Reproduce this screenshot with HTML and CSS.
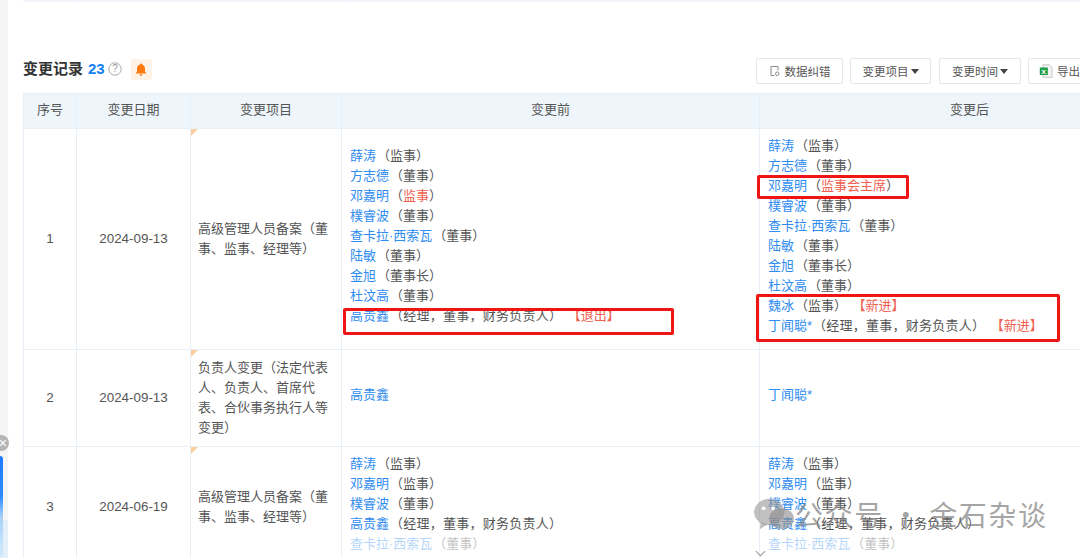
FILE: index.html
```html
<!DOCTYPE html>
<html lang="zh-CN">
<head>
<meta charset="utf-8">
<title>变更记录</title>
<link rel="stylesheet" href="styles.css">
</head>
<body>
<div class="page">
  <aside class="rail"></aside>
  <main class="main">
    <div class="prev-table"><i></i><i></i></div>
    <section class="head">
      <div class="title">
        <h2>变更记录</h2><span class="count">23</span>
        <svg class="help" viewBox="0 0 14 14" width="14" height="14"><circle cx="7" cy="7" r="6.2" fill="none" stroke="#aaa" stroke-width="1"/><text x="7" y="10.2" text-anchor="middle" class="help-q">?</text></svg>
        <span class="bell"><svg viewBox="0 0 12 13" width="12" height="13"><path d="M6 .6c.6 0 1 .4 1 .9 1.900.4 3 2 3 4v3l1.200 1.500v.5H.8v-.5L2 8.500v-3c0-2 1.100-3.600 3-4 0-.5.400-.9 1-.9zM4.500 11.300h3C7.500 12.200 6.800 12.800 6 12.800s-1.500-.6-1.500-1.500z" fill="#ff7a0f"/></svg></span>
      </div>
      <div class="tools">
        <button class="btn btn-wide"><svg viewBox="0 0 12 12" width="12" height="12"><path d="M2 1.500h7v4M2 1.500v9h3.500" fill="none" stroke="#888" stroke-width="1"/><rect x="6.500" y="7" width="3.500" height="3.500" rx="1.700" fill="none" stroke="#888"/></svg>数据纠错</button>
        <button class="btn">变更项目<i class="caret"></i></button>
        <button class="btn btn-time">变更时间<i class="caret"></i></button>
        <button class="btn btn-export"><svg viewBox="0 0 14 14" width="14" height="14"><path d="M4 .8h6.500L13 3.300v10H4z" fill="#f4f4f4" stroke="#bbb" stroke-width=".8"/><rect x=".8" y="3.500" width="8" height="7.500" fill="#1e9e4a"/><text x="4.800" y="9.600" text-anchor="middle" class="xl">x</text></svg>导出</button>
      </div>
    </section>
    <table class="records">
      <colgroup><col class="c1"><col class="c2"><col class="c3"><col class="c4"><col class="c5"></colgroup>
      <thead><tr><th>序号</th><th>变更日期</th><th>变更项目</th><th>变更前</th><th>变更后</th></tr></thead>
      <tbody>
        <tr class="r1">
          <td class="ctr">1</td><td class="ctr">2024-09-13</td>
          <td class="item">高级管理人员备案（董事、监事、经理等）</td>
          <td class="names before">
            <div><a>薛涛</a>（监事）</div><div><a>方志德</a>（董事）</div><div><a>邓嘉明</a>（<em>监事</em>）</div><div><a>樸睿波</a>（董事）</div><div><a>查卡拉·西索瓦</a>（董事）</div><div><a>陆敏</a>（董事）</div><div><a>金旭</a>（董事长）</div><div><a>杜汶高</a>（董事）</div><div class="long"><a>高贵鑫</a>（经理，董事，财务负责人）<em class="tag">【退出】</em></div>
          </td>
          <td class="names">
            <div><a>薛涛</a>（监事）</div><div><a>方志德</a>（董事）</div><div><a>邓嘉明</a>（<em>监事会主席</em>）</div><div><a>樸睿波</a>（董事）</div><div><a>查卡拉·西索瓦</a>（董事）</div><div><a>陆敏</a>（董事）</div><div><a>金旭</a>（董事长）</div><div><a>杜汶高</a>（董事）</div><div><a>魏冰</a>（监事）<em class="tag">【新进】</em></div><div class="long"><a>丁闻聪*</a>（经理，董事，财务负责人）<em class="tag">【新进】</em></div>
          </td>
        </tr>
        <tr class="r2">
          <td class="ctr">2</td><td class="ctr">2024-09-13</td>
          <td class="item">负责人变更（法定代表人、负责人、首席代表、合伙事务执行人等变更）</td>
          <td class="names before"><div><a>高贵鑫</a></div></td>
          <td class="names"><div><a>丁闻聪*</a></div></td>
        </tr>
        <tr class="r3">
          <td class="ctr">3</td><td class="ctr">2024-06-19</td>
          <td class="item">高级管理人员备案（董事、监事、经理等）</td>
          <td class="names before">
            <div><a>薛涛</a>（监事）</div><div><a>邓嘉明</a>（监事）</div><div><a>樸睿波</a>（董事）</div><div class="long"><a>高贵鑫</a>（经理，董事，财务负责人）</div><div class="fade"><a>查卡拉·西索瓦</a>（董事）</div>
          </td>
          <td class="names">
            <div><a>薛涛</a>（监事）</div><div><a>邓嘉明</a>（监事）</div><div><a>樸睿波</a>（董事）</div><div class="long"><a>高贵鑫</a>（经理，董事，财务负责人）</div><div class="fade"><a>查卡拉·西索瓦</a>（董事）</div>
          </td>
        </tr>
      </tbody>
    </table>
  </main>
  <div class="mark m1"></div>
  <div class="mark m2"></div>
  <div class="mark m3"></div>
  <div class="float-close">×</div>
  <div class="float-bar"></div>
  <div class="float-glow"></div>
  <div class="wm">
    <svg viewBox="0 0 44 38" width="42" height="36"><ellipse cx="17" cy="17" rx="16" ry="14" fill="#9a9a9a" opacity=".62"/><path d="M8 27l-1 8 8-5z" fill="#9a9a9a" opacity=".62"/><ellipse cx="30" cy="24" rx="13" ry="11" fill="#8c8c8c" opacity=".62"/><circle cx="11" cy="13" r="2" fill="#fff"/><circle cx="21" cy="13" r="2" fill="#fff"/></svg>
    <span>公众号 · 金石杂谈</span>
  </div>
  <div class="chev"></div>
</div>
</body>
</html>
```
FILE: styles.css
```css
* { box-sizing: border-box; }
html, body { margin: 0; padding: 0; background: #fff; }
.page {
  position: relative;
  display: flex;
  width: 1080px;
  height: 558px;
  overflow: hidden;
  font: 13px/20px "Liberation Sans", "Noto Sans CJK SC", sans-serif;
  color: #555;
}
.rail { flex: 0 0 8px; background: #f5f5f5; }
.main { flex: 1 1 auto; min-width: 0; padding-left: 15px; }
.prev-table {
  display: flex;
  height: 2px;
  width: 1300px;
  background: #f3f7fc;
}
.prev-table i { width: 1px; background: #e6edf5; margin-left: 52px; }
.prev-table i + i { margin-left: 268px; }
.head {
  display: flex;
  justify-content: space-between;
  align-items: center;
  width: 1177px;
  height: 26px;
  margin-top: 56px;
}
.title { display: flex; align-items: center; padding-bottom: 4px; }
.title h2 { margin: 0; font-size: 15px; font-weight: 700; color: #333; line-height: 22px; }
.count { margin-left: 5px; font-size: 15px; font-weight: 700; color: #1482f0; }
.help { margin-left: 3px; }
.help-q { font: 10px "Liberation Sans", sans-serif; fill: #999; }
.xl { font: 700 8px "Liberation Sans", sans-serif; fill: #fff; }
.bell {
  display: flex;
  align-items: center;
  justify-content: center;
  width: 21px;
  height: 21px;
  margin-left: 9px;
  border-radius: 2px;
  background: #fff3e8;
}
.tools { display: flex; gap: 7px; width: 444px; }
.btn {
  display: inline-flex;
  align-items: center;
  justify-content: center;
  flex: 0 0 auto;
  width: 81px;
  height: 26px;
  padding: 0;
  border: 1px solid #e4e7eb;
  border-radius: 2px;
  background: #fff;
  color: #555;
  font: 11.500px "Liberation Sans", "Noto Sans CJK SC", sans-serif;
}
.btn svg { margin-right: 4px; }
.btn-wide { width: 87px; }
.btn-time { margin-left: 1px; width: 82px; }
.btn-export { width: 90px; justify-content: flex-start; padding-left: 10px; }
.caret {
  width: 0;
  height: 0;
  margin-left: 2px;
  border-left: 4px solid transparent;
  border-right: 4px solid transparent;
  border-top: 5px solid #444;
}
.records {
  table-layout: fixed;
  width: 1156px;
  margin-top: 9px;
  border-collapse: collapse;
}
.c1 { width: 53px; } .c2 { width: 114px; } .c3 { width: 151px; } .c4 { width: 418px; } .c5 { width: 420px; }
.records th {
  height: 35px;
  padding: 0 0 2px;
  background: #eef5fb;
  border: 1px solid #e8f0f8;
  font-weight: 400;
  color: #555;
  text-align: center;
}
.records td {
  padding: 8px;
  border: 1px solid #e8eff7;
  vertical-align: middle;
}
.records td.ctr { text-align: center; padding: 0; color: #555; font-size: 13.400px; }
.records td.item {
  position: relative;
  padding: 8px 7px;
}
.records td.item::before {
  content: "";
  position: absolute;
  left: 0;
  top: 0;
  border-top: 7px solid #fbcf9f;
  border-right: 7px solid transparent;
}
.records td.names { padding: 7px 8px 13px; }
.records td.before { padding-left: 8px; }
.names a { color: #2f8cf0; margin-right: 1px; letter-spacing: 0; }
.names em { font-style: normal; color: #f0604f; }
.names em.tag { margin-left: 12px; letter-spacing: 0; }
.long { letter-spacing: .25px; }
.r1 { height: 221px; }
.r2 { height: 96px; }
.r3 { height: 120px; }
.fade { opacity: .35; }
.mark {
  position: absolute;
  border: 3px solid #f01414;
  border-radius: 2px;
  pointer-events: none;
}
.m1 { left: 343px; top: 308px; width: 331px; height: 27px; }
.m2 { left: 757px; top: 175px; width: 152px; height: 24px; }
.m3 { left: 756px; top: 294px; width: 304px; height: 48px; }
.float-close {
  position: absolute;
  left: -7px;
  top: 435px;
  width: 16px;
  height: 16px;
  border-radius: 50%;
  background: #b5b5b5;
  color: #fff;
  font: 14px/16px "Liberation Sans", sans-serif;
  text-align: right;
  padding-right: 2px;
}
.float-bar {
  position: absolute;
  left: 0;
  top: 456px;
  width: 3px;
  height: 102px;
  border-radius: 0 3px 3px 0;
  background: linear-gradient(#1a78ff, #2f8cff 40%, #a8d2fb 60%, #d4e9fb);
}
.float-glow {
  position: absolute;
  left: 3px;
  top: 520px;
  width: 5px;
  height: 38px;
  background: #e3eff9;
}
.wm {
  position: absolute;
  left: 753px;
  top: 496px;
  display: flex;
  align-items: center;
  color: rgba(130,130,130,.72);
  font: 28px/36px "Noto Sans CJK SC", sans-serif;
  letter-spacing: 1.600px;
  white-space: nowrap;
}
.chev {
  position: absolute;
  left: 757px;
  top: 548px;
  width: 7px;
  height: 7px;
  border-right: 1px solid #999;
  border-bottom: 1px solid #999;
  transform: rotate(45deg);
}
```
